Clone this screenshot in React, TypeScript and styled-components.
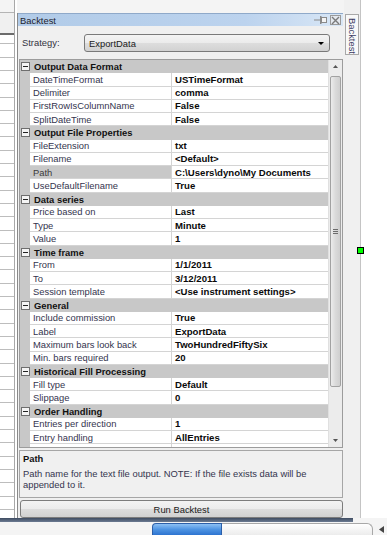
import styled, { createGlobalStyle } from "styled-components";

interface IProp {
  label: string;
  value: string;
  selected?: boolean;
}

interface ICategory {
  title: string;
  props: IProp[];
}

const categories: ICategory[] = [
  {
    title: "Output Data Format",
    props: [
      { label: "DateTimeFormat", value: "USTimeFormat" },
      { label: "Delimiter", value: "comma" },
      { label: "FirstRowIsColumnName", value: "False" },
      { label: "SplitDateTime", value: "False" },
    ],
  },
  {
    title: "Output File Properties",
    props: [
      { label: "FileExtension", value: "txt" },
      { label: "Filename", value: "<Default>" },
      { label: "Path", value: "C:\\Users\\dyno\\My Documents", selected: true },
      { label: "UseDefaultFilename", value: "True" },
    ],
  },
  {
    title: "Data series",
    props: [
      { label: "Price based on", value: "Last" },
      { label: "Type", value: "Minute" },
      { label: "Value", value: "1" },
    ],
  },
  {
    title: "Time frame",
    props: [
      { label: "From", value: "1/1/2011" },
      { label: "To", value: "3/12/2011" },
      { label: "Session template", value: "<Use instrument settings>" },
    ],
  },
  {
    title: "General",
    props: [
      { label: "Include commission", value: "True" },
      { label: "Label", value: "ExportData" },
      { label: "Maximum bars look back", value: "TwoHundredFiftySix" },
      { label: "Min. bars required", value: "20" },
    ],
  },
  {
    title: "Historical Fill Processing",
    props: [
      { label: "Fill type", value: "Default" },
      { label: "Slippage", value: "0" },
    ],
  },
  {
    title: "Order Handling",
    props: [
      { label: "Entries per direction", value: "1" },
      { label: "Entry handling", value: "AllEntries" },
      { label: "", value: "" },
    ],
  },
];

export default function App() {
  return (
    <>
      <GlobalStyle />
      <Screen>
        <Main>
          <LeftStrip>
            <StripTop />
            <StripHeader />
            <StripLines />
          </LeftStrip>
          <Panel>
            <TopGap />
            <PanelFrame>
              <TitleBar>
                <TitleText>Backtest</TitleText>
                <TitleButtons>
                  <svg width="14" height="10" viewBox="0 0 14 10">
                    <line x1="0" y1="5" x2="6" y2="5" stroke="#8a8a8a" strokeWidth="1" />
                    <rect x="6" y="1" width="1.5" height="8" fill="#8a8a8a" />
                    <rect x="7.5" y="2.5" width="5" height="5" fill="#f4f4f4" stroke="#8a8a8a" strokeWidth="1" />
                  </svg>
                  <CloseBox>
                    <svg width="9" height="9" viewBox="0 0 9 9">
                      <path d="M1 1 L8 8 M8 1 L1 8" stroke="#7a7a7a" strokeWidth="1.4" />
                    </svg>
                  </CloseBox>
                </TitleButtons>
              </TitleBar>
              <StrategyRow>
                <StrategyLabel>Strategy:</StrategyLabel>
                <Dropdown>
                  <span>ExportData</span>
                  <svg width="6" height="3" viewBox="0 0 6 3">
                    <path d="M0 0 L6 0 L3 3 Z" fill="#000" />
                  </svg>
                </Dropdown>
              </StrategyRow>
              <Grid>
                <Rows>
                  {categories.map((cat) => (
                    <div key={cat.title}>
                      <CategoryRow>
                        <Expander>
                          <span />
                        </Expander>
                        <CategoryTitle>{cat.title}</CategoryTitle>
                      </CategoryRow>
                      {cat.props.map((p, i) => (
                        <PropRow key={cat.title + i}>
                          <Margin />
                          <LabelCell $selected={!!p.selected}>{p.label}</LabelCell>
                          <ValueCell>{p.value}</ValueCell>
                        </PropRow>
                      ))}
                    </div>
                  ))}
                </Rows>
                <Scrollbar>
                  <ScrollBtn>
                    <svg width="5" height="3" viewBox="0 0 5 3">
                      <path d="M0 3 L5 3 L2.5 0 Z" fill="#555" />
                    </svg>
                  </ScrollBtn>
                  <Track>
                    <Thumb>
                      <Grip />
                      <Grip />
                      <Grip />
                    </Thumb>
                  </Track>
                  <ScrollBtn>
                    <svg width="5" height="3" viewBox="0 0 5 3">
                      <path d="M0 0 L5 0 L2.5 3 Z" fill="#555" />
                    </svg>
                  </ScrollBtn>
                </Scrollbar>
              </Grid>
              <Description>
                <DescTitle>Path</DescTitle>
                <DescText>
                  Path name for the text file output. NOTE: If the file exists data will be
                  <br />
                  appended to it.
                </DescText>
              </Description>
              <RunButton>Run Backtest</RunButton>
            </PanelFrame>
          </Panel>
          <RightColumn>
            <TopGapSmall />
            <SideTab>Backtest</SideTab>
          </RightColumn>
          <VLine />
          <Blank />
        </Main>
        <BottomBar>
          <DarkStrip />
          <TaskRow>
            <TaskSpacer />
            <BlueButton />
            <TaskField />
            <TaskArrow>
              <svg width="5" height="7" viewBox="0 0 5 7">
                <path d="M5 0 L5 7 L0 3.5 Z" fill="#444" />
              </svg>
            </TaskArrow>
          </TaskRow>
        </BottomBar>
        <Handle />
      </Screen>
    </>
  );
}

const GlobalStyle = createGlobalStyle`
  html, body {
    margin: 0;
    padding: 0;
  }
  body {
    background: #ffffff;
    font-family: "Liberation Sans", Arial, sans-serif;
  }
`;

const Screen = styled.div`
  position: relative;
  width: 387px;
  height: 535px;
  display: flex;
  flex-direction: column;
  overflow: hidden;
  font-size: 9.4px;
  color: #2f2f45;
`;

const Main = styled.div`
  height: 518px;
  display: flex;
`;

const LeftStrip = styled.div`
  width: 14px;
  border-right: 1px solid #a8a8a8;
  display: flex;
  flex-direction: column;
`;

const StripTop = styled.div`
  height: 13px;
  background: #f4f4f4;
  border-bottom: 1px solid #b4b4b4;
  box-sizing: border-box;
`;

const StripHeader = styled.div`
  height: 22px;
  background: #f0f0f0;
  border-bottom: 2px solid #6c6c6c;
  box-sizing: border-box;
`;

const StripLines = styled.div`
  flex: 1;
  background-color: #ffffff;
  background-image: repeating-linear-gradient(
    to bottom,
    #ffffff 0,
    #ffffff 12.3px,
    #bdbdbd 12.3px,
    #bdbdbd 13.3px
  );
  background-position: 0 -4px;
`;

const Panel = styled.div`
  width: 327px;
  margin-left: 2px;
  display: flex;
  flex-direction: column;
  background: #f0f0f0;
`;

const TopGap = styled.div`
  height: 13px;
  background: #f4f4f4;
`;

const PanelFrame = styled.div`
  flex: 1;
  display: flex;
  flex-direction: column;
  border-left: 1px solid #8a8a8a;
  background: #f0f0f0;
`;

const TitleBar = styled.div`
  height: 13px;
  display: flex;
  align-items: center;
  justify-content: space-between;
  padding: 0 2px 0 2px;
  margin-right: 1px;
  background: linear-gradient(to right, #b1cbe8 0%, #bcd3ee 70%, #d9e7f6 100%);
  border-top: 1px solid #8fa9c9;
  box-sizing: border-box;
`;

const TitleText = styled.span`
  color: #1e1e2e;
`;

const TitleButtons = styled.div`
  display: flex;
  align-items: center;
  gap: 2px;
`;

const CloseBox = styled.div`
  width: 11px;
  height: 10px;
  border: 1px solid #9a9a9a;
  background: #e4e8ee;
  display: flex;
  align-items: center;
  justify-content: center;
  box-sizing: border-box;
`;

const StrategyRow = styled.div`
  height: 33px;
  display: flex;
  align-items: flex-start;
  padding-top: 8px;
  box-sizing: border-box;
`;

const StrategyLabel = styled.span`
  width: 62px;
  padding-left: 4px;
  line-height: 18px;
  color: #333340;
`;

const Dropdown = styled.div`
  width: 246px;
  height: 18px;
  box-sizing: border-box;
  border: 1px solid #7a7a7a;
  border-radius: 3px;
  background: linear-gradient(to bottom, #f4f4f4 0%, #ebebeb 50%, #dddddd 51%, #d2d2d2 100%);
  display: flex;
  align-items: center;
  justify-content: space-between;
  padding: 0 5px 0 4px;
  color: #1a1a1a;
`;

const Grid = styled.div`
  height: 389px;
  width: 324px;
  margin-left: 1px;
  box-sizing: border-box;
  border: 1px solid #9c9c9c;
  background: #ffffff;
  display: flex;
  overflow: hidden;
`;

const Rows = styled.div`
  flex: 1;
  overflow: hidden;
`;

const CategoryRow = styled.div`
  height: 13.25px;
  display: flex;
  align-items: center;
  background: #c8c8c8;
`;

const Expander = styled.div`
  width: 9px;
  height: 9px;
  margin-left: 1px;
  box-sizing: border-box;
  border: 1px solid #6e6e6e;
  background: #f4f4f4;
  display: flex;
  align-items: center;
  justify-content: center;

  span {
    width: 5px;
    height: 1px;
    background: #222;
  }
`;

const CategoryTitle = styled.span`
  margin-left: 4px;
  font-weight: bold;
  color: #111;
`;

const PropRow = styled.div`
  height: 13.25px;
  display: flex;
`;

const Margin = styled.div`
  width: 10px;
  background: #c8c8c8;
`;

const LabelCell = styled.div<{ $selected: boolean }>`
  width: 142px;
  box-sizing: border-box;
  padding-left: 3px;
  display: flex;
  align-items: center;
  white-space: nowrap;
  overflow: hidden;
  border-right: 1px solid #d4d4d4;
  border-bottom: 1px solid #d4d4d4;
  background: ${(p) => (p.$selected ? "#c8c8c8" : "#ffffff")};
  color: ${(p) => (p.$selected ? "#3a3a3a" : "#34344e")};
`;

const ValueCell = styled.div`
  flex: 1;
  box-sizing: border-box;
  padding-left: 3px;
  display: flex;
  align-items: center;
  white-space: nowrap;
  overflow: hidden;
  border-bottom: 1px solid #d4d4d4;
  font-weight: bold;
  font-size: 9.6px;
  color: #0a0a0a;
`;

const Scrollbar = styled.div`
  width: 13px;
  display: flex;
  flex-direction: column;
  background: #ececec;
  border-left: 1px solid #e0e0e0;
`;

const ScrollBtn = styled.div`
  height: 13px;
  display: flex;
  align-items: center;
  justify-content: center;
`;

const Track = styled.div`
  flex: 1;
  padding-top: 3px;
`;

const Thumb = styled.div`
  height: 311px;
  margin: 0 1px;
  box-sizing: border-box;
  border: 1px solid #a2a2a2;
  border-radius: 2px;
  background: linear-gradient(to right, #ececec 0%, #dadada 50%, #cfcfcf 100%);
  display: flex;
  flex-direction: column;
  align-items: center;
  justify-content: center;
  gap: 1px;
`;

const Grip = styled.div`
  width: 5px;
  height: 1px;
  background: #6c6c6c;
`;

const Description = styled.div`
  height: 48px;
  width: 324px;
  margin: 2px 0 0 1px;
  box-sizing: border-box;
  border: 1px solid #a6a6a6;
  background: #f0f0f0;
  padding: 2px 3px;
`;

const DescTitle = styled.div`
  font-weight: bold;
  color: #111;
  line-height: 12px;
`;

const DescText = styled.div`
  margin-top: 3px;
  line-height: 11px;
  color: #34344e;
`;

const RunButton = styled.div`
  height: 18px;
  margin: 2px 1px 0 2px;
  box-sizing: border-box;
  border: 1px solid #7c7c7c;
  border-radius: 3px;
  background: linear-gradient(to bottom, #f3f3f3 0%, #ebebeb 50%, #dddddd 51%, #d0d0d0 100%);
  display: flex;
  align-items: center;
  justify-content: center;
  color: #1a1a1a;
`;

const RightColumn = styled.div`
  width: 16px;
  display: flex;
  flex-direction: column;
  background: #f0f0f0;
`;

const TopGapSmall = styled.div`
  height: 14px;
`;

const SideTab = styled.div`
  width: 14px;
  height: 41px;
  margin-left: 1px;
  box-sizing: border-box;
  border: 1px solid #a8a8a8;
  background: #f8f8f8;
  writing-mode: vertical-rl;
  display: flex;
  align-items: center;
  padding-top: 3px;
  color: #3a3a62;
`;

const VLine = styled.div`
  width: 1px;
  background: #c4c4c4;
`;

const Blank = styled.div`
  flex: 1;
  background: #ffffff;
`;

const BottomBar = styled.div`
  height: 17px;
  display: flex;
  flex-direction: column;
  background: #f4f4f4;
`;

const DarkStrip = styled.div`
  height: 4px;
  width: 353px;
  background: linear-gradient(to bottom, #3e4b60 0%, #6c7b92 100%);
`;

const TaskRow = styled.div`
  flex: 1;
  display: flex;
  align-items: flex-end;
`;

const TaskSpacer = styled.div`
  width: 152px;
`;

const BlueButton = styled.div`
  width: 70px;
  height: 12px;
  border-radius: 4px 0 0 0;
  border: 1px solid #2c5fa8;
  border-bottom: none;
  box-sizing: border-box;
  background: linear-gradient(to bottom, #8cc0f4 0%, #4d93e2 50%, #2e74d0 100%);
`;

const TaskField = styled.div`
  width: 151px;
  height: 12px;
  box-sizing: border-box;
  border: 1px solid #a8a8a8;
  border-bottom: none;
  border-left: none;
  border-radius: 0 6px 0 0;
  background: linear-gradient(to bottom, #ffffff 0%, #ececec 100%);
`;

const TaskArrow = styled.div`
  flex: 1;
  height: 12px;
  display: flex;
  align-items: center;
  justify-content: flex-end;
  padding-right: 3px;
`;

const Handle = styled.div`
  position: absolute;
  left: 357px;
  top: 247px;
  width: 7px;
  height: 7px;
  box-sizing: border-box;
  border: 1px solid #000;
  background: #00ff00;
`;
